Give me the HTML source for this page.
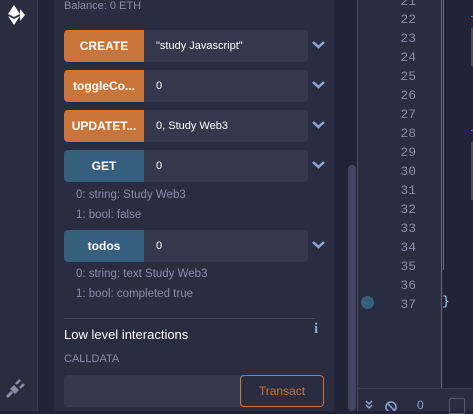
<!DOCTYPE html><html><head><style>
body{margin:0;width:473px;height:411px;overflow:hidden;background:#222336;font-family:"Liberation Sans",sans-serif;position:relative}
div{position:absolute;box-sizing:border-box}
.btn{left:64px;width:80px;height:32px;border-radius:4px 0 0 4px;color:#fff;font-size:12px;font-weight:bold;text-align:center;line-height:32px}
.o{background:#c97539}.b{background:#355f7d}
.in{left:144px;width:164px;height:32px;background:#35374c;border-radius:0 4px 4px 0;color:#fff;font-size:11px;line-height:32px;padding-left:12px}
.t{left:76px;color:#8a8fab;font-size:11.5px}
.ln{left:380px;width:36px;text-align:right;color:#8a8ea8;font-family:"Liberation Mono",monospace;font-size:13px}
</style></head><body>
<div style="left:0;top:0;width:38px;height:411px;background:#2a2c3f;border-right:1px solid #3a3c50"></div>
<div style="left:54px;top:0;width:280px;height:411px;background:#2a2c3f"></div>
<div style="left:348px;top:165px;width:8px;height:246px;background:#444660;border-radius:4px"></div>
<div style="left:357px;top:0;width:1px;height:411px;background:#4a4c63"></div>
<div style="left:358px;top:0;width:84px;height:388px;background:#2a2c3f;border-right:1px solid #6a6c80"></div>
<div style="left:358px;top:388px;width:115px;height:23px;background:#2a2c3f;border-top:1px solid #3a3c50"></div>
<svg style="position:absolute;left:4px;top:4px" width="22" height="22" viewBox="0 0 22 22"><path d="M10 1 L4 10 L10 13 L16 10 Z M4 12 L10 21 L16 12 L10 15 Z" fill="#fff"/><path d="M16 5 L21 11 L16 17" fill="#fff"/></svg>
<svg style="position:absolute;left:4px;top:376px" width="24" height="24" viewBox="0 0 24 24"><path d="M3 21 L8 16" stroke="#8a8ea8" stroke-width="3" fill="none"/><path d="M6 13 L11 18 L15 14 L10 9 Z" fill="#8a8ea8"/><path d="M12 8 L16 4 M16 12 L20 8" stroke="#8a8ea8" stroke-width="2.5"/></svg>
<div style="left:64px;top:0px;color:#8a8fab;font-size:11px">Balance: 0 ETH</div>
<div class="btn o" style="top:30px">CREATE</div><div class="in" style="top:30px">"study Javascript"</div>
<div class="btn o" style="top:70px">toggleCo...</div><div class="in" style="top:70px">0</div>
<div class="btn o" style="top:110px">UPDATET...</div><div class="in" style="top:110px">0, Study Web3</div>
<div class="btn b" style="top:150px">GET</div><div class="in" style="top:150px">0</div>
<div class="btn b" style="top:230px">todos</div><div class="in" style="top:230px">0</div>
<svg style="position:absolute;left:312px;top:40px" width="13" height="210"><g stroke="#8fa3d6" stroke-width="2.5" fill="none"><path d="M1 2 L6.5 7 L12 2"/><path d="M1 42 L6.5 47 L12 42"/><path d="M1 82 L6.5 87 L12 82"/><path d="M1 122 L6.5 127 L12 122"/><path d="M1 202 L6.5 207 L12 202"/></g></svg>
<div class="t" style="top:189px">0: string: Study Web3</div>
<div class="t" style="top:209px">1: bool: false</div>
<div class="t" style="top:268px">0: string: text Study Web3</div>
<div class="t" style="top:288px">1: bool: completed true</div>
<div style="left:64px;top:318px;width:251px;height:1px;background:#44465c"></div>
<div style="left:64px;top:327px;color:#fff;font-size:13px">Low level interactions</div>
<div style="left:314px;top:321px;color:#8fa3d6;font-size:15px;font-weight:bold;font-family:'Liberation Serif',serif">i</div>
<div style="left:64px;top:353px;color:#8a8fab;font-size:11px">CALLDATA</div>
<div style="left:64px;top:375px;width:178px;height:32px;background:#35374c;border-radius:4px 0 0 4px"></div>
<div style="left:240px;top:375px;width:84px;height:32px;border:1px solid #c97539;border-radius:4px;color:#c97539;font-size:12px;text-align:center;line-height:30px">Transact</div>
<div class="ln" style="top:-6px">21</div><div class="ln" style="top:12px">22</div><div class="ln" style="top:31px">23</div><div class="ln" style="top:50px">24</div><div class="ln" style="top:69px">25</div><div class="ln" style="top:88px">26</div><div class="ln" style="top:107px">27</div><div class="ln" style="top:126px">28</div><div class="ln" style="top:145px">29</div><div class="ln" style="top:164px">30</div><div class="ln" style="top:183px">31</div><div class="ln" style="top:202px">32</div><div class="ln" style="top:221px">33</div><div class="ln" style="top:240px">34</div><div class="ln" style="top:259px">35</div><div class="ln" style="top:278px">36</div><div class="ln" style="top:297px">37</div>
<div style="left:361px;top:296px;width:13px;height:13px;border-radius:50%;background:#355f7d"></div>
<div style="left:443px;top:0;width:1px;height:270px;background:#6a6c80"></div>
<div style="left:442px;top:294px;color:#9cdcfe;font-family:'Liberation Mono',monospace;font-size:13px">}</div>
<div style="left:471px;top:28px;width:2px;height:38px;background:#4a4c5c"></div>
<div style="left:471px;top:142px;width:2px;height:58px;background:#4a4c5c"></div>
<div style="left:471px;top:16px;width:2px;height:1px;background:#3b8fd6"></div>
<div style="left:471px;top:130px;width:2px;height:1px;background:#3b8fd6"></div>
<svg style="position:absolute;left:365px;top:400px" width="60" height="11"><path d="M1 1 L4 4 L7 1 M1 5 L4 8 L7 5" stroke="#8fa3d6" stroke-width="1.5" fill="none"/><circle cx="26" cy="7" r="5" stroke="#8fa3d6" stroke-width="1.5" fill="none"/><path d="M22.5 3.5 L29.5 10.5" stroke="#8fa3d6" stroke-width="1.5"/></svg>
<div style="left:417px;top:398px;color:#8fa3d6;font-size:12px">0</div>
<div style="left:449px;top:398px;width:16px;height:16px;border:1px solid #55576c;border-radius:2px"></div>
</body></html>
